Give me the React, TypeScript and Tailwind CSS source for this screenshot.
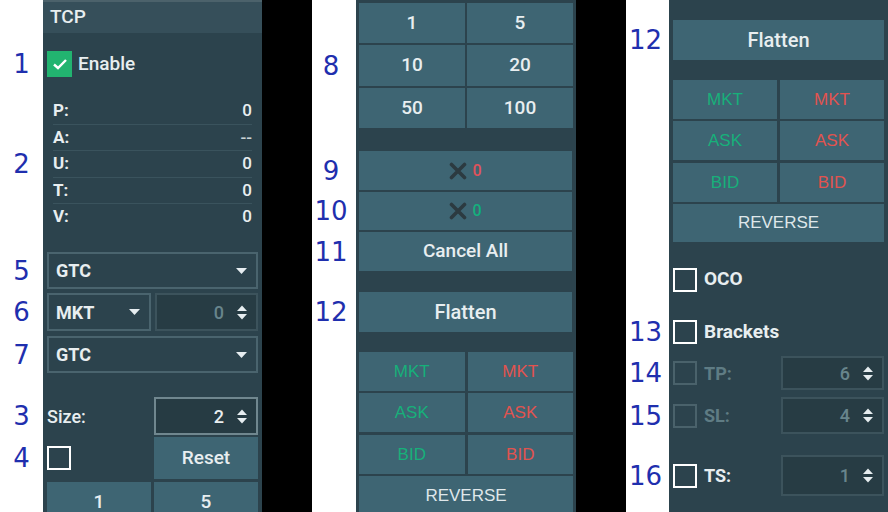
import React from "react";

const ui = { fontFamily: "Roboto, 'Liberation Sans', sans-serif" };
const arial = { fontFamily: "'Liberation Sans', Arial, sans-serif" };

function Caret() {
  return (
    <svg width="11" height="6" viewBox="0 0 11 6">
      <path d="M0 0 L11 0 L5.5 6 Z" fill="#e6edf0" />
    </svg>
  );
}

function Spinner() {
  return (
    <svg width="12" height="17" viewBox="0 0 12 17">
      <path d="M1 7 L6 1.5 L11 7 Z" fill="#e6edf0" />
      <path d="M1 10 L11 10 L6 15.5 Z" fill="#e6edf0" />
    </svg>
  );
}

function XMark() {
  return (
    <svg width="18" height="18" viewBox="0 0 18 18">
      <path d="M2.5 2.5 L15.5 15.5 M15.5 2.5 L2.5 15.5" stroke="#2c3a40" strokeWidth="3.6" strokeLinecap="round" />
    </svg>
  );
}

// one line of a column: white gutter with the blue callout number, then the panel part
function Row({ num, h, gutter, children, className = "" }: { num?: string; h: string; gutter: string; children?: React.ReactNode; className?: string }) {
  return (
    <div className={`flex shrink-0 ${h}`}>
      <div
        className={`${gutter} shrink-0 bg-white flex items-center justify-center text-[26px] leading-none text-[#1f2fae]`}
        style={{ fontFamily: "'DejaVu Sans', sans-serif" }}
      >
        {num}
      </div>
      <div className={`flex-1 bg-[#2c434d] ${className}`}>{children}</div>
    </div>
  );
}

function Btn({ children, className = "" }: { children: React.ReactNode; className?: string }) {
  return (
    <div className={`flex items-center justify-center bg-[#3e6573] ${className}`}>{children}</div>
  );
}

function Select({ label }: { label: string }) {
  return (
    <div className="h-full border-2 border-[#4a646e] flex items-center justify-between pl-[7px] pr-[9px]">
      <span className="text-[18px] font-bold text-[#e8eef0]">{label}</span>
      <Caret />
    </div>
  );
}

function NumBox({ value, dim, bright }: { value: string; dim?: boolean; bright?: boolean }) {
  return (
    <div
      className={`h-full border-2 flex items-center justify-end gap-[12px] pr-[8px] ${
        bright ? "border-[#70878f] bg-[#263b43]" : "border-[#3c535c] bg-[#273c44]"
      }`}
    >
      <span className={`text-[18px] font-medium ${dim ? "text-[#68858c]" : "text-[#e8eef0]"}`}>{value}</span>
      <Spinner />
    </div>
  );
}

function Box({ dim }: { dim?: boolean }) {
  return <div className={`w-[24px] h-[24px] shrink-0 border-2 ${dim ? "border-[#4a626b]" : "border-white"}`} />;
}

function Side({ gutter, px, rev }: { gutter: string; px: string; rev: string }) {
  const pairs = ["MKT", "ASK", "BID"];
  return (
    <Row h={rev === "h-[40px]" ? "h-[164px]" : "h-[162px]"} gutter={gutter} className={`${px} flex flex-col`}>
      <div style={arial} className="flex flex-col">
        {pairs.map((p, i) => (
          <div key={p} className={`grid grid-cols-2 gap-[3px] h-[39px] ${i > 0 ? (i === 2 ? "mt-[3px]" : "mt-[2px]") : ""}`}>
            <Btn className="text-[17px] text-[#17b07a]">{p}</Btn>
            <Btn className="text-[17px] text-[#e2534f]">{p}</Btn>
          </div>
        ))}
        <Btn className={`mt-[2px] ${rev} text-[17px] text-[#dfe7ea]`}>REVERSE</Btn>
      </div>
    </Row>
  );
}

function Col1() {
  const g = "w-[43px]";
  const stats = [
    ["P:", "0"],
    ["A:", "--"],
    ["U:", "0"],
    ["T:", "0"],
    ["V:", "0"],
  ];
  return (
    <div className="w-[262px] flex flex-col overflow-hidden" style={ui}>
      <Row h="h-[33px]" gutter={g} className="bg-[#364f5a] border-t-2 border-[#4c626b] flex items-center pl-[7px]">
        <span className="text-[19px] font-medium text-[#e8eef0]">TCP</span>
      </Row>
      <Row h="h-[18px]" gutter={g} />
      <Row num="1" h="h-[26px]" gutter={g} className="flex items-center pl-[4px] gap-[6px]">
        <div className="w-[25px] h-[26px] bg-[#22b470] flex items-center justify-center">
          <svg width="16" height="14" viewBox="0 0 16 14">
            <path d="M2 7.5 L6 11 L14 3" stroke="white" strokeWidth="2.4" fill="none" />
          </svg>
        </div>
        <span className="text-[19px] font-medium text-[#e8eef0]">Enable</span>
      </Row>
      <Row h="h-[21px]" gutter={g} />
      <Row num="2" h="h-[131px]" gutter={g} className="px-[10px] flex flex-col">
        {stats.map((s, i) => (
          <div
            key={s[0]}
            className={`flex-1 flex items-center justify-between text-[17px] font-bold text-[#e8eef0] ${
              i < 4 ? "border-b border-[#3a535d]" : ""
            }`}
          >
            <span>{s[0]}</span>
            <span className={s[1] === "--" ? "text-[#c9d3d6] font-medium" : "font-medium"}>{s[1]}</span>
          </div>
        ))}
      </Row>
      <Row h="h-[23px]" gutter={g} />
      <Row num="5" h="h-[37px]" gutter={g} className="px-[4px]">
        <Select label="GTC" />
      </Row>
      <Row h="h-[4px]" gutter={g} />
      <Row num="6" h="h-[38px]" gutter={g} className="px-[4px] flex gap-[4px]">
        <div className="w-[104px] h-full">
          <Select label="MKT" />
        </div>
        <div className="flex-1 h-full">
          <NumBox value="0" dim />
        </div>
      </Row>
      <Row h="h-[5px]" gutter={g} />
      <Row num="7" h="h-[37px]" gutter={g} className="px-[4px]">
        <Select label="GTC" />
      </Row>
      <Row h="h-[24px]" gutter={g} />
      <Row num="3" h="h-[38px]" gutter={g} className="px-[4px] flex gap-[3px]">
        <div className="w-[104px] flex items-center text-[18px] font-medium text-[#e8eef0]">Size:</div>
        <div className="flex-1 h-full">
          <NumBox value="2" bright />
        </div>
      </Row>
      <Row h="h-[2px]" gutter={g} />
      <Row num="4" h="h-[42px]" gutter={g} className="px-[4px] flex gap-[3px]">
        <div className="w-[104px] flex items-center">
          <Box />
        </div>
        <Btn className="flex-1 text-[19px] font-medium text-[#e8eef0]">Reset</Btn>
      </Row>
      <Row h="h-[3px]" gutter={g} />
      <Row h="h-[40px]" gutter={g} className="px-[4px] grid grid-cols-2 gap-[3px]">
        <Btn className="text-[19px] font-medium text-[#e8eef0]">1</Btn>
        <Btn className="text-[19px] font-medium text-[#e8eef0]">5</Btn>
      </Row>
    </div>
  );
}

function Col2() {
  const g = "w-[44px] pr-[6px]";
  const nums = [
    ["1", "5"],
    ["10", "20"],
    ["50", "100"],
  ];
  return (
    <div className="w-[264px] flex flex-col overflow-hidden" style={ui}>
      <Row h="h-[3px]" gutter={g} />
      <Row num="8" h="h-[125px]" gutter={g} className="px-[3px] flex flex-col gap-[2px]">
        {nums.map((p) => (
          <div key={p[0]} className="flex-1 grid grid-cols-2 gap-[2px]">
            <Btn className="text-[19px] font-medium text-[#e8eef0]">{p[0]}</Btn>
            <Btn className="text-[19px] font-medium text-[#e8eef0]">{p[1]}</Btn>
          </div>
        ))}
      </Row>
      <Row h="h-[23px]" gutter={g} />
      <Row num="9" h="h-[39px]" gutter={g} className="pl-[3px] pr-[4px]">
        <Btn className="h-full gap-[5px]">
          <XMark />
          <span className="text-[16px] font-medium text-[#e0525b]">0</span>
        </Btn>
      </Row>
      <Row h="h-[2px]" gutter={g} />
      <Row num="10" h="h-[38px]" gutter={g} className="pl-[3px] pr-[4px]">
        <Btn className="h-full gap-[5px]">
          <XMark />
          <span className="text-[16px] font-medium text-[#14b07d]">0</span>
        </Btn>
      </Row>
      <Row h="h-[2px]" gutter={g} />
      <Row num="11" h="h-[39px]" gutter={g} className="pl-[3px] pr-[4px]">
        <Btn className="h-full text-[19px] font-medium text-[#e8eef0]">Cancel All</Btn>
      </Row>
      <Row h="h-[21px]" gutter={g} />
      <Row num="12" h="h-[40px]" gutter={g} className="pl-[3px] pr-[4px]">
        <Btn className="h-full text-[20px] font-medium text-[#e8eef0]">Flatten</Btn>
      </Row>
      <Row h="h-[20px]" gutter={g} />
      <Side gutter={g} px="px-[3px]" rev="h-[40px]" />
      <Row h="h-[40px]" gutter={g} />
    </div>
  );
}

function Col3() {
  const g = "w-[43px] pr-[4px]";
  return (
    <div className="w-[262px] flex flex-col overflow-hidden" style={ui}>
      <Row h="h-[20px]" gutter={g} />
      <Row num="12" h="h-[40px]" gutter={g} className="px-[4px]">
        <Btn className="h-full text-[20px] font-medium text-[#e8eef0]">Flatten</Btn>
      </Row>
      <Row h="h-[20px]" gutter={g} />
      <Side gutter={g} px="px-[4px]" rev="h-[38px]" />
      <Row h="h-[25px]" gutter={g} />
      <Row h="h-[25px]" gutter={g} className="px-[4px] flex items-center gap-[7px]">
        <Box />
        <span className="text-[19px] font-bold text-[#e8eef0]">OCO</span>
      </Row>
      <Row h="h-[28px]" gutter={g} />
      <Row num="13" h="h-[24px]" gutter={g} className="px-[4px] flex items-center gap-[7px]">
        <Box />
        <span className="text-[19px] font-bold text-[#e8eef0]">Brackets</span>
      </Row>
      <Row h="h-[12px]" gutter={g} />
      <Row num="14" h="h-[34px]" gutter={g} className="pl-[4px] pr-[4px] flex items-center gap-[7px]">
        <Box dim />
        <span className="flex-1 text-[18px] font-bold text-[#5f7c84]">TP:</span>
        <div className="w-[103px] h-full">
          <NumBox value="6" dim />
        </div>
      </Row>
      <Row h="h-[7px]" gutter={g} />
      <Row num="15" h="h-[37px]" gutter={g} className="pl-[4px] pr-[4px] flex items-center gap-[7px]">
        <Box dim />
        <span className="flex-1 text-[18px] font-bold text-[#5f7c84]">SL:</span>
        <div className="w-[103px] h-full">
          <NumBox value="4" dim />
        </div>
      </Row>
      <Row h="h-[21px]" gutter={g} />
      <Row num="16" h="h-[41px]" gutter={g} className="pl-[4px] pr-[4px] flex items-center gap-[7px]">
        <Box />
        <span className="flex-1 text-[18px] font-bold text-[#e8eef0]">TS:</span>
        <div className="w-[103px] h-full">
          <NumBox value="1" dim />
        </div>
      </Row>
      <Row h="h-[40px]" gutter={g} />
    </div>
  );
}

export default function App() {
  return (
    <div className="w-[888px] h-[512px] flex bg-black overflow-hidden">
      <Col1 />
      <div className="w-[50px] shrink-0" />
      <Col2 />
      <div className="w-[50px] shrink-0" />
      <Col3 />
    </div>
  );
}
